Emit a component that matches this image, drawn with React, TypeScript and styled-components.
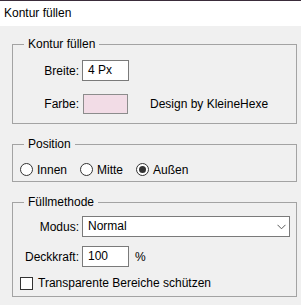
import * as React from "react";
import styled, { createGlobalStyle } from "styled-components";

const GlobalStyle = createGlobalStyle`
  html, body {
    margin: 0;
    padding: 0;
    background: #f0f0f0;
  }
  body {
    font-family: "Liberation Sans", Arial, sans-serif;
    font-size: 12px;
    color: #000;
  }
`;

const App: React.FC = () => {
  return (
    <>
      <GlobalStyle />
      <Window>
        <TitleBar>Kontur füllen</TitleBar>
        <Content>
          <Group>
            <Legend>Kontur füllen</Legend>
            <GroupBody $top={8} $bottom={9}>
              <Row>
                <Label>Breite:</Label>
                <TextField $width={47}>4 Px</TextField>
              </Row>
              <Row $gap={13}>
                <Label>Farbe:</Label>
                <Swatch $color="#f2dce6" />
                <Note>Design by KleineHexe</Note>
              </Row>
            </GroupBody>
          </Group>

          <Group $spaced>
            <Legend>Position</Legend>
            <GroupBody $top={9} $bottom={3}>
              <RadioRow>
                <RadioOption>
                  <Radio />
                  Innen
                </RadioOption>
                <RadioOption>
                  <Radio />
                  Mitte
                </RadioOption>
                <RadioOption>
                  <Radio $checked />
                  Außen
                </RadioOption>
              </RadioRow>
            </GroupBody>
          </Group>

          <Group $spaced>
            <Legend>Füllmethode</Legend>
            <GroupBody $top={6} $bottom={5}>
              <Row>
                <Label>Modus:</Label>
                <Select>
                  Normal
                  <Chevron width="9" height="6" viewBox="0 0 9 6">
                    <path d="M0.5 0.8 L4.5 4.8 L8.5 0.8" fill="none" stroke="#5a5a5a" strokeWidth="1" />
                  </Chevron>
                </Select>
              </Row>
              <Row $gap={9}>
                <Label>Deckkraft:</Label>
                <TextField $width={47}>100</TextField>
                <Unit>%</Unit>
              </Row>
              <CheckRow>
                <CheckBox />
                Transparente Bereiche schützen
              </CheckRow>
            </GroupBody>
          </Group>
        </Content>
      </Window>
    </>
  );
};

export default App;

const Window = styled.div`
  width: 301px;
  height: 305px;
  overflow: hidden;
  background: #f0f0f0;
`;

const TitleBar = styled.div`
  height: 25px;
  border-top: 1px solid #3a2c3a;
  background: #fff;
  padding-left: 4px;
  line-height: 25px;
  box-sizing: content-box;
`;

const Content = styled.div`
  padding: 10px 4px 8px 12px;
`;

const Group = styled.fieldset<{ $spaced?: boolean }>`
  margin: ${(p) => (p.$spaced ? "12px" : "0")} 0 0 0;
  padding: 0;
  border: 1px solid #a3a3a3;
  min-inline-size: 0;
`;

const Legend = styled.legend`
  margin-left: 11px;
  padding: 0 4px;
  line-height: 16px;
  height: 16px;
`;

const GroupBody = styled.div<{ $top: number; $bottom: number }>`
  padding-top: ${(p) => p.$top}px;
  padding-bottom: ${(p) => p.$bottom}px;
`;

const Row = styled.div<{ $gap?: number }>`
  display: flex;
  align-items: center;
  margin-top: ${(p) => p.$gap ?? 0}px;
`;

const Label = styled.div`
  width: 66px;
  margin-right: 3px;
  text-align: right;
  white-space: nowrap;
`;

const TextField = styled.div<{ $width: number }>`
  box-sizing: border-box;
  width: ${(p) => p.$width}px;
  height: 21px;
  border: 1px solid #7a7a7a;
  background: #fff;
  padding-left: 5px;
  line-height: 19px;
`;

const Swatch = styled.div<{ $color: string }>`
  box-sizing: border-box;
  width: 45px;
  height: 20px;
  margin-left: 1px;
  border: 1px solid #8c8c8c;
  background: ${(p) => p.$color};
`;

const Note = styled.div`
  margin-left: 22px;
`;

const Unit = styled.div`
  margin-left: 6px;
`;

const Select = styled.div`
  box-sizing: border-box;
  width: 208px;
  height: 21px;
  border: 1px solid #7a7a7a;
  background: #fff;
  padding: 0 0 0 5px;
  line-height: 19px;
  display: flex;
  align-items: center;
  justify-content: space-between;
`;

const Chevron = styled.svg`
  margin-right: 3px;
  display: block;
`;

const RadioRow = styled.div`
  display: flex;
  align-items: center;
  height: 17px;
  padding-left: 7px;
  gap: 13px;
`;

const RadioOption = styled.div`
  display: flex;
  align-items: center;
  gap: 4px;
`;

const Radio = styled.span<{ $checked?: boolean }>`
  box-sizing: border-box;
  width: 13px;
  height: 13px;
  border: 1px solid #333;
  border-radius: 50%;
  background: #fff;
  display: flex;
  align-items: center;
  justify-content: center;
  &::after {
    content: "";
    display: ${(p) => (p.$checked ? "block" : "none")};
    width: 7px;
    height: 7px;
    border-radius: 50%;
    background: #333;
  }
`;

const CheckRow = styled.div`
  display: flex;
  align-items: center;
  gap: 5px;
  height: 16px;
  margin-top: 8px;
  padding-left: 7px;
`;

const CheckBox = styled.span`
  box-sizing: border-box;
  width: 13px;
  height: 13px;
  border: 1px solid #333;
  background: #fff;
`;
